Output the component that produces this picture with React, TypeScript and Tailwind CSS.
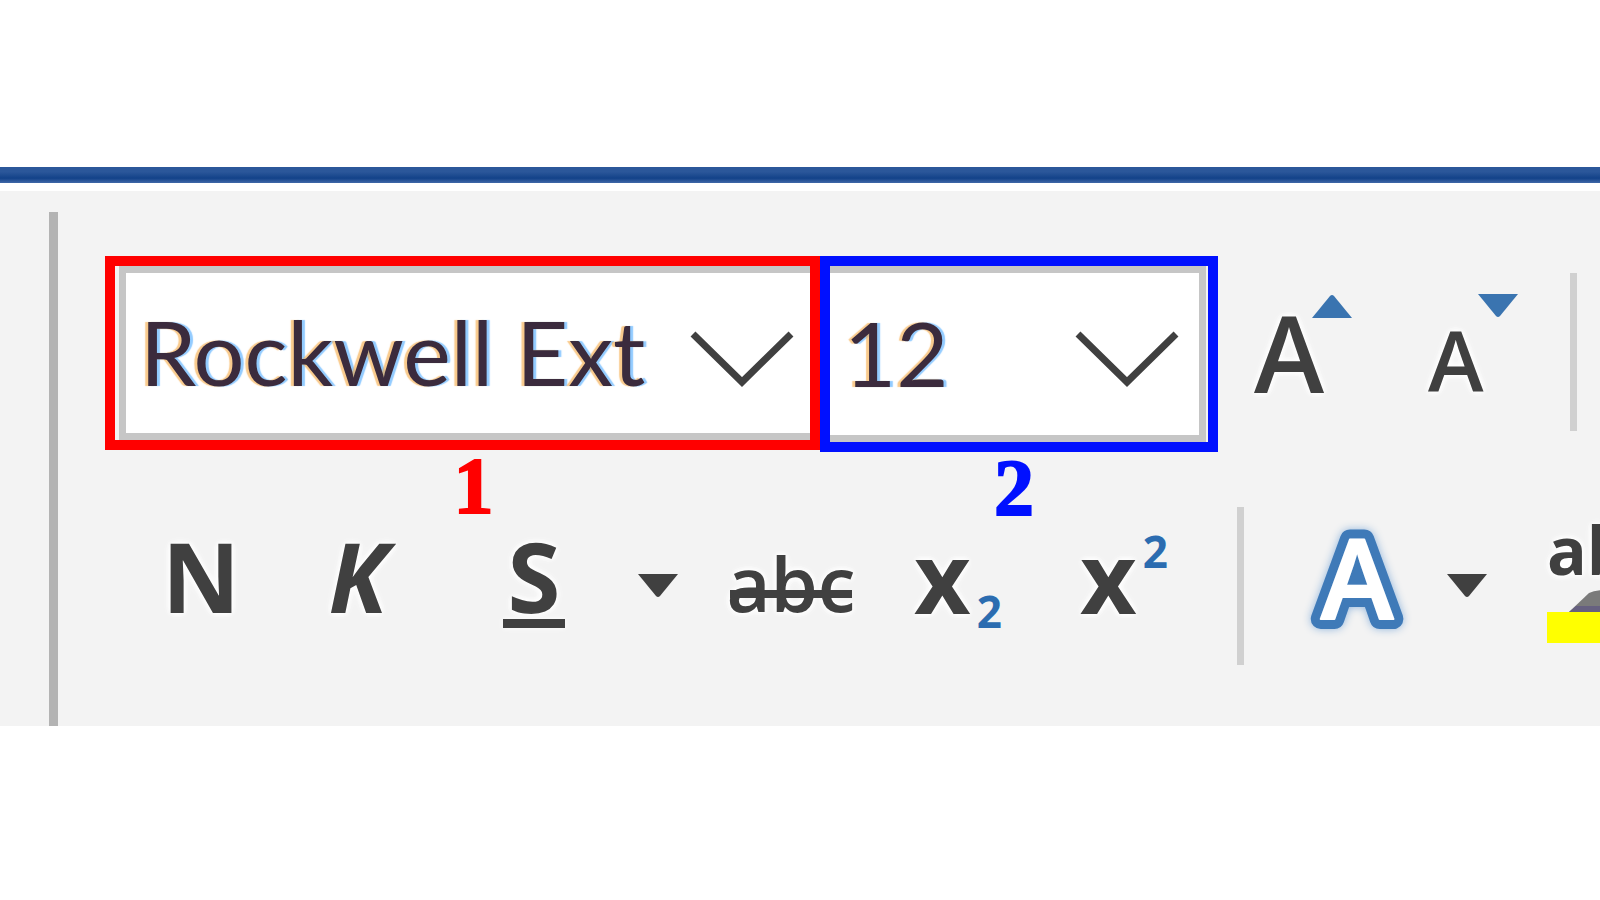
import type { ReactNode } from 'react'
import clsx from 'clsx'

const FONTS = ['Rockwell Ext', 'Calibri', 'Times New Roman']
const SIZES = ['12', '14', '16', '18']

const LCD_FRINGE = '[text-shadow:-3px_0_1px_#f5a74099,3px_0_1px_#4aa8ff99]'
const HALO = '[text-shadow:0_0_6px_#fff,0_0_6px_#fff,0_0_10px_#fff]'

interface FieldProps {
  label: string
  id: string
  options: string[]
  className: string
  chevronClass: string
}

function SelectField({ label, id, options, className, chevronClass }: FieldProps) {
  return (
    <div className="relative h-full">
      <select
        id={id}
        aria-label={label}
        className={clsx(
          "block h-full w-full appearance-none border-[#c6c6c6] bg-white pb-[4px] pl-[14px] font-['Lato',sans-serif] text-[90px] text-[#3b2b3d] outline-none",
          LCD_FRINGE,
          className,
        )}
      >
        {options.map(o => (
          <option key={o}>{o}</option>
        ))}
      </select>
      <svg
        viewBox="0 0 104 58"
        className={clsx('pointer-events-none absolute top-[64px] h-[58px] w-[104px]', chevronClass)}
      >
        <path d="M3 4 L52 52 L101 4" fill="none" stroke="#404040" strokeWidth="7" />
      </svg>
    </div>
  )
}

function Separator() {
  return <div className="h-[158px] w-[7px] shrink-0 bg-[#d0d0d0]" />
}

function ToolButton({ label, className, children }: { label: string; className: string; children: ReactNode }) {
  return (
    <button aria-label={label} className={clsx('flex h-[158px] shrink-0 justify-center', className)}>
      {children}
    </button>
  )
}

function Caret({ down = true, className }: { down?: boolean; className: string }) {
  return (
    <svg viewBox="0 0 40 24" className={clsx('h-[24px] w-[40px] shrink-0', className)}>
      <path d={down ? 'M0 0H40L22 22Q20 24 18 22Z' : 'M0 24H40L22 2Q20 0 18 2Z'} fill="currentColor" />
    </svg>
  )
}

export default function App() {
  return (
    <main className="min-h-screen overflow-hidden bg-white pt-[167px] font-['Open_Sans',sans-serif] text-[#404040]">
      <section className="bg-[#f3f3f3]">
        <div className="h-[16px] bg-linear-to-b from-[#2b579a] from-30% via-[#124289] via-70% to-[#3f68a8]" />
        <div className="h-[8px] bg-white" />

        <div className="flex pt-[21px] pl-[49px]">
          <div className="w-[9px] shrink-0 bg-[#b3b3b3]" />

          <div className="flex h-[514px] min-w-0 flex-1 flex-col pt-[44px] pl-[47px]">
            {/* Font family, size, grow / shrink */}
            <div className="flex h-[251px] items-start">
              <div className="w-[715px] shrink-0">
                <div className="h-[194px] border-[10px] border-[#ff0000] pl-[4px]">
                  <SelectField
                    label="Font"
                    id="font"
                    options={FONTS}
                    className="border-y-[7px] border-l-[7px]"
                    chevronClass="right-[16px]"
                  />
                </div>
                <label
                  htmlFor="font"
                  className="block pl-[22px] text-center font-['Liberation_Serif',serif] text-[80px] leading-[72px] font-bold text-[#ff0000] [-webkit-text-stroke:2px_#ff0000]"
                >
                  1
                </label>
              </div>
              <div className="w-[398px] shrink-0">
                <div className="h-[196px] border-[10px] border-[#0010ff] pr-[2px]">
                  <SelectField
                    label="Font size"
                    id="size"
                    options={SIZES}
                    className="border-y-[7px] border-r-[7px]"
                    chevronClass="right-[27px]"
                  />
                </div>
                <label
                  htmlFor="size"
                  className="block pr-[10px] text-center font-['Liberation_Serif',serif] text-[80px] leading-[72px] font-bold text-[#0010ff] [-webkit-text-stroke:2px_#0010ff]"
                >
                  2
                </label>
              </div>

              <button aria-label="Increase font size" className="ml-[36px] flex h-[192px] w-[104px] shrink-0">
                <span className={clsx('text-[106px] leading-[192px] font-semibold', HALO)}>A</span>
                <Caret down={false} className="mt-[38px] -ml-[12px] text-[#3a74b0]" />
              </button>
              <button aria-label="Decrease font size" className="ml-[70px] flex h-[192px] w-[104px] shrink-0">
                <span className={clsx('text-[84px] leading-[208px] font-semibold', HALO)}>A</span>
                <Caret className="mt-[38px] -ml-[6px] text-[#3a74b0]" />
              </button>
              <div className="mt-[17px] ml-[38px]">
                <Separator />
              </div>
            </div>

            {/* Character formatting */}
            <div className="flex items-start">
              <ToolButton label="Bold" className="ml-[35px] w-[122px]">
                <span className={clsx('text-[96px] leading-[138px] font-bold', HALO)}>N</span>
              </ToolButton>
              <ToolButton label="Italic" className="w-[192px]">
                <span className={clsx('text-[96px] leading-[138px] font-bold italic', HALO)}>K</span>
              </ToolButton>
              <ToolButton label="Underline" className="ml-[12px] w-[136px] flex-col items-center justify-start! pt-[26px]">
                <span className={clsx('text-[96px] leading-[86px] font-bold', HALO)}>S</span>
                <span className="h-[9px] w-[62px] bg-[#404040] shadow-[0_0_6px_#fff]" />
              </ToolButton>
              <ToolButton label="Underline style" className="w-[112px]">
                <Caret className="mt-[67px]" />
              </ToolButton>
              <ToolButton label="Strikethrough" className="relative w-[154px]">
                <span className={clsx('text-[76px] leading-[152px] font-semibold', HALO)}>abc</span>
                <span className="absolute inset-x-[16px] top-[83px] h-[8px] bg-[#404040]" />
              </ToolButton>
              <ToolButton label="Subscript" className="w-[180px] gap-[6px]">
                <span className={clsx('text-[98px] leading-[138px] font-bold', HALO)}>x</span>
                <span className="text-[44px] leading-[208px] font-bold text-[#2b6cb0]">2</span>
              </ToolButton>
              <ToolButton label="Superscript" className="w-[152px] gap-[6px]">
                <span className={clsx('text-[98px] leading-[138px] font-bold', HALO)}>x</span>
                <span className="text-[44px] leading-[88px] font-bold text-[#2b6cb0]">2</span>
              </ToolButton>
              <div className="ml-[37px]">
                <Separator />
              </div>
              <ToolButton label="Text effects" className="ml-[43px] w-[140px]">
                <svg
                  viewBox="0 0 140 158"
                  className="h-[158px] w-[140px] shrink-0 overflow-visible drop-shadow-[0_0_4px_#8fb4dc]"
                >
                  <g fontSize="110" fontWeight="600" textAnchor="middle" strokeLinejoin="round">
                    <text x="70" y="112" fill="#2b68ab" stroke="#3f7ab8" strokeWidth="20">A</text>
                    <text x="70" y="112" fill="#ffffff" stroke="#ffffff" strokeWidth="2">A</text>
                  </g>
                </svg>
              </ToolButton>
              <ToolButton label="Text effects menu" className="w-[80px]">
                <Caret className="mt-[67px]" />
              </ToolButton>
              {/* Runs past the right edge of the ribbon */}
              <ToolButton label="Highlight colour" className="ml-[40px] w-[120px] flex-col justify-start!">
                <span className={clsx('h-[83px] text-left text-[66px] leading-[84px] font-bold', HALO)}>ab</span>
                <svg viewBox="0 0 120 22" className="h-[22px] w-[120px] shrink-0">
                  <path d="M22 22L42 3Q48 0 60 0H120V22Z" fill="#7a7a7a" />
                  <path d="M22 22L29 16H120V22Z" fill="#666080" />
                </svg>
                <span className="h-[31px] w-full shrink-0 bg-[#ffff00]" />
              </ToolButton>
            </div>
          </div>
        </div>
      </section>
    </main>
  )
}
